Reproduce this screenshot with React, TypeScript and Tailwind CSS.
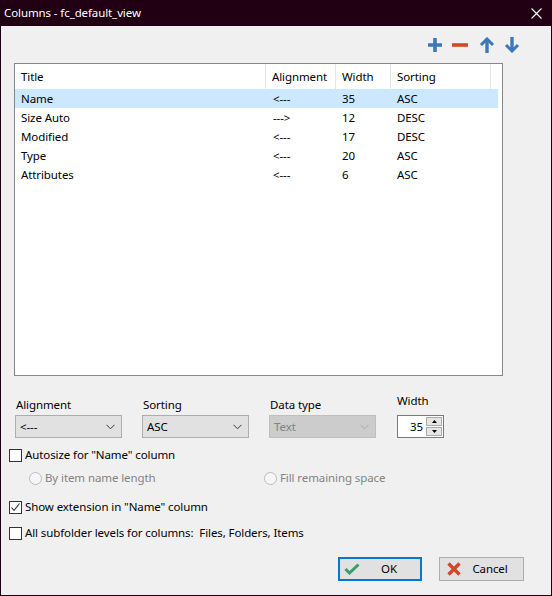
import React from "react";

const rows = [
  { t: "Name", a: "<---", w: "35", s: "ASC", sel: true },
  { t: "Size Auto", a: "--->", w: "12", s: "DESC" },
  { t: "Modified", a: "<---", w: "17", s: "DESC" },
  { t: "Type", a: "<---", w: "20", s: "ASC" },
  { t: "Attributes", a: "<---", w: "6", s: "ASC" },
];

function Chevron({ color = "#333" }: { color?: string }) {
  return (
    <svg width="9" height="6" viewBox="0 0 9 6">
      <path d="M0.5 0.8 L4.5 4.8 L8.5 0.8" fill="none" stroke={color} strokeWidth="1" />
    </svg>
  );
}

function Combo({ value, disabled }: { value: string; disabled?: boolean }) {
  return (
    <div
      className={
        disabled
          ? "w-[107px] h-[23px] bg-[#cccccc] border border-[#bfbfbf] flex items-center justify-between pl-[4px] pr-[6px] text-[#838383]"
          : "w-[107px] h-[23px] bg-[#e1e1e1] border border-[#adadad] flex items-center justify-between pl-[4px] pr-[6px] text-black"
      }
    >
      <span>{value}</span>
      <Chevron color={disabled ? "#a8a8a8" : "#333"} />
    </div>
  );
}

function CheckBox({ checked }: { checked?: boolean }) {
  return (
    <div className="w-[13px] h-[13px] border border-[#333333] bg-white flex items-center justify-center shrink-0">
      {checked && (
        <svg width="11" height="11" viewBox="0 0 11 11">
          <path d="M1.5 5.5 L4 8.5 L9.5 1.5" fill="none" stroke="#333" strokeWidth="1.1" />
        </svg>
      )}
    </div>
  );
}

function Radio() {
  return <div className="w-[13px] h-[13px] rounded-full border border-[#bcbcbc] bg-[#f6f6f6] shrink-0" />;
}

export default function App() {
  return (
    <div className="w-[552px] h-[596px] bg-[#200012] flex flex-col font-['Noto_Sans',sans-serif] text-[11.5px] tracking-[-0.1px] leading-[16px] text-black overflow-hidden">
      {/* Title bar */}
      <div className="h-[26px] flex items-center justify-between pl-[4px] pr-[10px] text-white shrink-0">
        <span>Columns - fc_default_view</span>
        <svg width="11" height="11" viewBox="0 0 11 11">
          <path d="M0.5 0.5 L10.5 10.5 M10.5 0.5 L0.5 10.5" stroke="#fff" strokeWidth="1.1" />
        </svg>
      </div>
      {/* Content */}
      <div className="mx-[1px] mb-[1px] flex-1 bg-[#f0f0f0] flex flex-col">
        {/* Toolbar */}
        <div className="h-[37px] flex items-start pt-[11px] pl-[426px]">
          <svg width="16" height="16" viewBox="0 0 16 16">
            <path d="M8 1 V15 M1 8 H15" stroke="#3b78b9" strokeWidth="3.6" />
          </svg>
          <svg width="16" height="16" viewBox="0 0 16 16" className="ml-[9px]">
            <path d="M0 8 H16" stroke="#cf4a2b" strokeWidth="3.6" />
          </svg>
          <svg width="16" height="16" viewBox="0 0 16 16" className="ml-[11px]">
            <path d="M8 2.5 V16" stroke="#3b78b9" strokeWidth="3.4" />
            <path d="M2 8 L8 2 L14 8" fill="none" stroke="#3b78b9" strokeWidth="3" />
          </svg>
          <svg width="16" height="16" viewBox="0 0 16 16" className="ml-[9px]">
            <path d="M8 0 V13.5" stroke="#3b78b9" strokeWidth="3.4" />
            <path d="M2 8 L8 14 L14 8" fill="none" stroke="#3b78b9" strokeWidth="3" />
          </svg>
        </div>
        {/* List */}
        <div className="ml-[13px] w-[489px] h-[313px] border border-[#828790] bg-white flex flex-col">
          <div className="h-[25px] flex">
            <div className="w-[251px] border-r border-[#e5e5e5] pl-[6px] flex items-center">Title</div>
            <div className="w-[70px] border-r border-[#e5e5e5] pl-[6px] flex items-center">Alignment</div>
            <div className="w-[55px] border-r border-[#e5e5e5] pl-[6px] flex items-center">Width</div>
            <div className="w-[100px] border-r border-[#e5e5e5] pl-[6px] flex items-center">Sorting</div>
          </div>
          {rows.map((r) => (
            <div
              key={r.t}
              className={r.sel ? "h-[19px] w-[483px] flex items-center bg-[#cce8ff]" : "h-[19px] w-[483px] flex items-center"}
            >
              <div className="w-[251px] pl-[6px]">{r.t}</div>
              <div className="w-[70px] pl-[7px]">{r.a}</div>
              <div className="w-[55px] pl-[6px]">{r.w}</div>
              <div className="w-[100px] pl-[6px]">{r.s}</div>
            </div>
          ))}
        </div>
        {/* Combos */}
        <div className="mt-[21px] flex items-start pl-[14px]">
          <div className="flex flex-col">
            <div className="pl-[1px] mb-[2px]">Alignment</div>
            <Combo value="<---" />
          </div>
          <div className="flex flex-col ml-[20px]">
            <div className="pl-[1px] mb-[2px]">Sorting</div>
            <Combo value="ASC" />
          </div>
          <div className="flex flex-col ml-[20px]">
            <div className="pl-[1px] mb-[2px]">Data type</div>
            <Combo value="Text" disabled />
          </div>
          <div className="flex flex-col ml-[21px] -mt-[4px]">
            <div className="mb-[6px]">Width</div>
            <div className="w-[47px] h-[23px] bg-white border border-[#7a7a7a] flex items-center">
              <div className="flex-1 text-right pr-[3px]">35</div>
              <div className="w-[16px] h-[19px] mr-[1px] flex flex-col gap-[1px]">
                <div className="flex-1 bg-[#e5e5e5] border border-[#acacac] flex items-center justify-center">
                  <svg width="5" height="3" viewBox="0 0 5 3"><path d="M0 3 L2.5 0 L5 3Z" fill="#000" /></svg>
                </div>
                <div className="flex-1 bg-[#e5e5e5] border border-[#acacac] flex items-center justify-center">
                  <svg width="5" height="3" viewBox="0 0 5 3"><path d="M0 0 L2.5 3 L5 0Z" fill="#000" /></svg>
                </div>
              </div>
            </div>
          </div>
        </div>
        {/* Autosize */}
        <div className="mt-[9px] flex items-center pl-[8px] gap-[3px]">
          <CheckBox />
          <span>Autosize for "Name" column</span>
        </div>
        <div className="mt-[7px] flex items-center text-[#838383]">
          <div className="flex items-center pl-[28px] gap-[3px] w-[263px]">
            <Radio />
            <span>By item name length</span>
          </div>
          <div className="flex items-center gap-[3px]">
            <Radio />
            <span>Fill remaining space</span>
          </div>
        </div>
        <div className="mt-[13px] flex items-center pl-[8px] gap-[3px]">
          <CheckBox checked />
          <span>Show extension in "Name" column</span>
        </div>
        <div className="mt-[10px] flex items-center pl-[8px] gap-[3px]">
          <CheckBox />
          <span>All subfolder levels for columns:&nbsp; Files, Folders, Items</span>
        </div>
        {/* Buttons */}
        <div className="mt-[16px] flex pl-[337px]">
          <div className="w-[84px] h-[24px] border-2 border-[#0078d7] bg-[#e1e1e1] flex items-center">
            <svg width="16" height="12" viewBox="0 0 16 12" className="ml-[4px]">
              <path d="M1.5 6 L5.5 10 L14.5 1.5" fill="none" stroke="#3e9a6f" strokeWidth="3" />
            </svg>
            <span className="flex-1 text-center pr-[2px]">OK</span>
          </div>
          <div className="ml-[17px] w-[85px] h-[24px] border border-[#adadad] bg-[#e1e1e1] flex items-center">
            <svg width="14" height="14" viewBox="0 0 14 14" className="ml-[7px]">
              <path d="M1.5 1.5 L12.5 12.5 M12.5 1.5 L1.5 12.5" stroke="#d3462b" strokeWidth="3.4" />
            </svg>
            <span className="flex-1 text-center pr-[4px]">Cancel</span>
          </div>
        </div>
      </div>
    </div>
  );
}
